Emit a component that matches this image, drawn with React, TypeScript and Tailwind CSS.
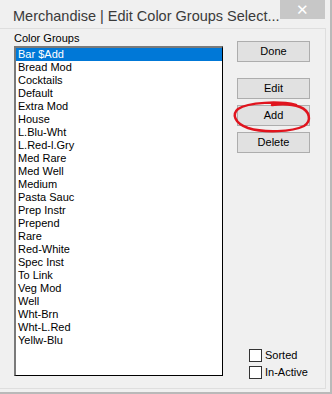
import { useState } from "react";

const groups = [
  "Bar $Add",
  "Bread Mod",
  "Cocktails",
  "Default",
  "Extra Mod",
  "House",
  "L.Blu-Wht",
  "L.Red-l.Gry",
  "Med Rare",
  "Med Well",
  "Medium",
  "Pasta Sauc",
  "Prep Instr",
  "Prepend",
  "Rare",
  "Red-White",
  "Spec Inst",
  "To Link",
  "Veg Mod",
  "Well",
  "Wht-Brn",
  "Wht-L.Red",
  "Yellw-Blu",
];

function WinButton({ label, className = "" }: { label: string; className?: string }) {
  return (
    <button
      type="button"
      className={`w-[73px] h-[21px] bg-[#e1e1e1] border border-[#adadad] text-[11px] text-black leading-none ${className}`}
    >
      {label}
    </button>
  );
}

function Check({ label }: { label: string }) {
  const [on, setOn] = useState(false);
  return (
    <label className="flex items-center gap-[3px] h-[17px] cursor-default" onClick={() => setOn(!on)}>
      <span className="w-[13px] h-[13px] bg-white border border-[#333] flex items-center justify-center text-[10px] leading-none">
        {on ? "✓" : ""}
      </span>
      <span className="text-[11px] text-black">{label}</span>
    </label>
  );
}

export default function App() {
  const [selected, setSelected] = useState(0);

  return (
    <div
      className="relative w-[332px] h-[394px] bg-[#f0f0f0] flex flex-col border-r-2 border-b-2 border-[#b9b9b9] overflow-hidden"
      style={{ fontFamily: '"Liberation Sans", Arial, sans-serif' }}
    >
      {/* title bar */}
      <div className="relative h-[28px] shrink-0">
        <div className="pl-[13px] pt-[6px] text-[14.5px] leading-[20px] text-[#3a3a3a] whitespace-nowrap">
          Merchandise | Edit Color Groups Select...
        </div>
        <div className="absolute right-[5px] top-0 w-[45px] h-[19px] bg-[#c7c7c7] flex items-center justify-center text-white text-[15px] leading-none">
          ✕
        </div>
      </div>

      {/* client area */}
      <div className="flex-1 flex mr-[4px] mb-[3px] border-t border-r border-b border-[#dedede] pl-[14px]">
        <div className="flex flex-col">
          <div className="text-[11px] leading-[13px] text-black pt-[3px]">Color Groups</div>
          <div className="mt-[1px] w-[209px] h-[330px] bg-white border-l-2 border-t-2 border-[#7a7a7a] border-r border-b border-r-black border-b-black">
            {groups.map((g, i) => (
              <div
                key={g}
                onClick={() => setSelected(i)}
                className={`h-[13px] pl-[2px] text-[11px] leading-[13px] whitespace-nowrap ${
                  i === selected ? "bg-[#0078d7] text-white" : "text-black"
                }`}
              >
                {g}
              </div>
            ))}
          </div>
        </div>

        <div className="flex flex-col ml-[14px] pt-[12px] pb-[7px]">
          <WinButton label="Done" />
          <WinButton label="Edit" className="mt-[16px]" />
          <WinButton label="Add" className="mt-[6px]" />
          <WinButton label="Delete" className="mt-[6px]" />
          <div className="mt-auto ml-[12px] flex flex-col">
            <Check label="Sorted" />
            <Check label="In-Active" />
          </div>
        </div>
      </div>

      {/* red marker ellipse */}
      <svg className="absolute left-[230px] top-[99px] pointer-events-none" width="84" height="36" viewBox="0 0 84 36">
        <path
          d="M66 6 C50 2, 18 3, 8 10 C2 15, 4 24, 18 29 C34 34, 62 33, 74 27 C82 22, 80 12, 70 8 C62 5, 50 5, 42 6"
          fill="none"
          stroke="#e0141e"
          strokeWidth="2.5"
          strokeLinecap="round"
        />
      </svg>
    </div>
  );
}
